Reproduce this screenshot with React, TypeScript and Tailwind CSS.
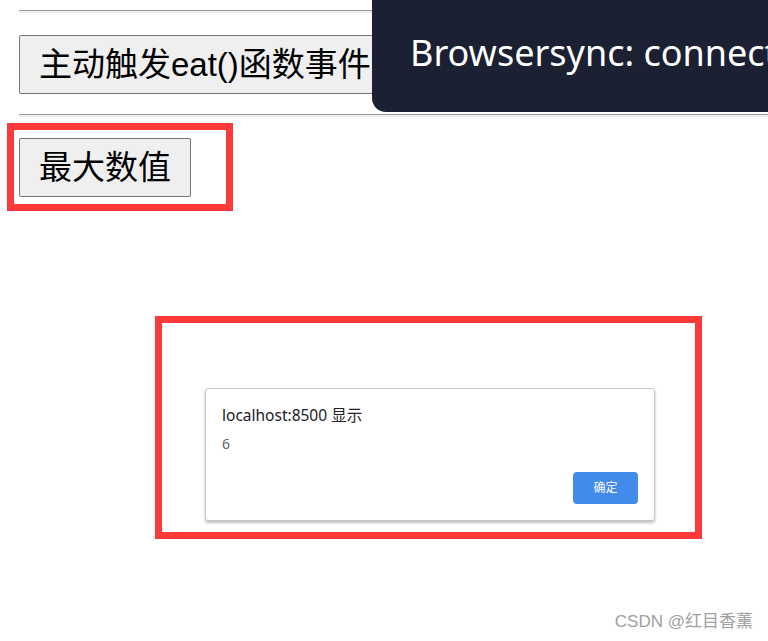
import React from 'react';

const sans = { fontFamily: '"Liberation Sans", "Noto Sans CJK SC", sans-serif' };
const ui = { fontFamily: '"Noto Sans", "Noto Sans CJK SC", sans-serif' };

function Rule() {
  return <div className="ml-[19px] h-[3px] border-t border-t-[#9a9a9a] border-b-2 border-b-[#eeeeee]" />;
}

function PlainButton({ children }: { children: React.ReactNode }) {
  return (
    <button
      className="block h-[59px] whitespace-nowrap rounded-[2px] border border-[#767676] bg-[#efefef] px-[19px] text-[33px] leading-none text-black"
      style={sans}
    >
      {children}
    </button>
  );
}

function AlertDialog() {
  return (
    <div
      className="flex h-[133px] w-[450px] flex-col rounded-[3px] border border-[#c8c8c8] bg-white px-[16px] shadow-[0_2px_3px_rgba(0,0,0,0.25)]"
      style={ui}
    >
      <div className="pt-[16px] text-[15.5px] leading-[20px] text-[#202124]">localhost:8500 显示</div>
      <div className="pt-[10px] text-[14px] leading-[18px] text-[#5f6368]">6</div>
      <div className="mt-auto flex justify-end pb-[16px]">
        <button className="h-[32px] w-[65px] rounded-[4px] bg-[#428bea] text-[12px] text-white">确定</button>
      </div>
    </div>
  );
}

export default function App() {
  return (
    <div className="relative h-[641px] w-[768px] overflow-hidden bg-white">
      <div className="flex flex-col items-start pt-[10px]">
        <div className="self-stretch">
          <Rule />
        </div>
        <div className="ml-[19px] mt-[22px]">
          <PlainButton>主动触发eat()函数事件</PlainButton>
        </div>
        <div className="mt-[20px] self-stretch">
          <Rule />
        </div>

        {/* red highlight around the max button */}
        <div className="ml-[7px] mt-[6px] h-[88px] w-[226px] border-[7px] border-[#fd3a3a] pl-[5px] pt-[8px]">
          <PlainButton>最大数值</PlainButton>
        </div>

        {/* red highlight around the alert */}
        <div className="ml-[155px] mt-[105px] h-[223px] w-[547px] border-[7px] border-[#fd3a3a] pl-[43px] pt-[65px]">
          <AlertDialog />
        </div>
      </div>

      {/* browsersync notice */}
      <div
        className="absolute left-[372px] right-0 top-0 flex h-[112px] items-center overflow-hidden whitespace-nowrap rounded-bl-[14px] bg-[#1c2033] pb-[6px] pl-[38px] text-[36px] text-white"
        style={ui}
      >
        Browsersync: connected
      </div>

      {/* watermark */}
      <div className="absolute bottom-[7px] right-[15px] text-[17px] text-[#a0a0a0]" style={sans}>
        CSDN @红目香薰
      </div>
    </div>
  );
}
